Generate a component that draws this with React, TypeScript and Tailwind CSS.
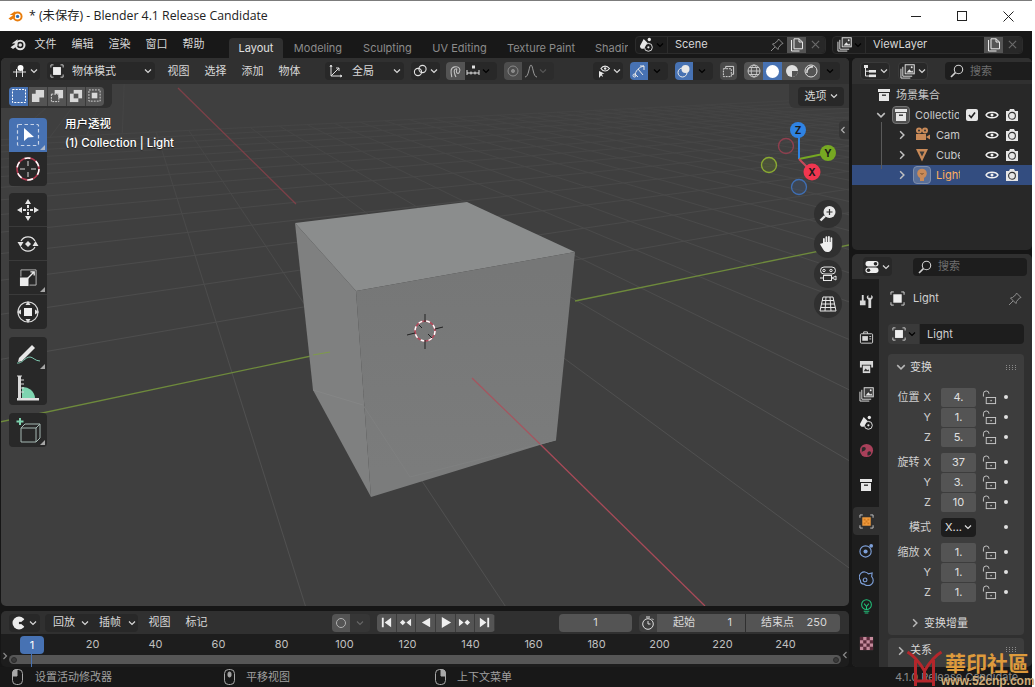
import React from "react";

type P = { className?: string };

const Chev = ({ dir = "down", className = "" }: { dir?: "down" | "right" | "left"; className?: string }) => {
  const d = dir === "down" ? "M1 2.5 L4 5.5 L7 2.5" : dir === "right" ? "M2.5 1 L5.5 4 L2.5 7" : "M5.5 1 L2.5 4 L5.5 7";
  return (
    <svg viewBox="0 0 8 8" className={`w-2 h-2 shrink-0 ${className}`} fill="none" stroke="currentColor" strokeWidth="1.2">
      <path d={d} />
    </svg>
  );
};

const BlenderLogo = ({ className = "", body = "#e0e0e0", eye = "#e0e0e0" }: { className?: string; body?: string; eye?: string }) => (
  <svg viewBox="0 0 18 14" className={className}>
    <path d="M8.5 1.2 L2 5.8 L6.5 5.9 L0.6 10 L3.4 12.2 L8.5 8.4Z" fill={body} />
    <circle cx="11.5" cy="7.5" r="4.8" fill="none" stroke={body} strokeWidth="2.3" />
    <circle cx="11.5" cy="7.5" r="2" fill={eye} />
  </svg>
);

const ObjIcon = ({ className = "", fill = "#eeeeee" }: { className?: string; fill?: string }) => (
  <svg viewBox="0 0 16 16" className={className} fill="none" stroke="#d8d8d8" strokeWidth="1">
    <path d="M1 4V1H4M12 1H15V4M15 12V15H12M4 15H1V12" />
    <rect x="3.5" y="3.5" width="9" height="9" fill={fill} stroke="none" />
  </svg>
);

const Lock = () => (
  <svg viewBox="0 0 16 16" className="w-[15px] h-[15px]" fill="none" stroke="#c8c8c8" strokeWidth="1">
    <path d="M1.5 7V4a3 3 0 0 1 6 0" />
    <rect x="4.5" y="8" width="10" height="6.5" />
    <rect x="9" y="10.6" width="1.4" height="1.4" fill="#c8c8c8" stroke="none" />
  </svg>
);

const Eye = ({ className = "" }: P) => (
  <svg viewBox="0 0 14 14" className={`w-[14px] h-[14px] ${className}`} fill="none" stroke="#f0f0f0" strokeWidth="1.5">
    <path d="M1 7 C3 3.2 11 3.2 13 7 C11 10.8 3 10.8 1 7 Z" />
    <circle cx="7" cy="7" r="1.5" fill="#f0f0f0" stroke="none" />
  </svg>
);

const Cam = ({ className = "" }: P) => (
  <svg viewBox="0 0 14 14" className={`w-[14px] h-[14px] ${className}`}>
    <path d="M1 3H4L5 1H9L10 3H13V13H1Z" fill="#e6e6e6" />
    <circle cx="7" cy="7.8" r="3.4" fill="none" stroke="#333" strokeWidth="1.1" />
  </svg>
);

const Mouse = ({ side }: { side: "l" | "m" | "r" }) => (
  <svg viewBox="0 0 11 16" className="w-[11px] h-4 shrink-0" fill="none" stroke="#a8a8a8" strokeWidth="1">
    <rect x="0.5" y="0.5" width="10" height="15" rx="4" />
    {side === "l" && <path d="M0.5 7V4.5a4 4 0 0 1 4-4H5V7Z" fill="#a8a8a8" />}
    {side === "r" && <path d="M10.5 7V4.5a4 4 0 0 0-4-4H6V7Z" fill="#a8a8a8" />}
    {side === "m" && <rect x="4" y="3" width="3" height="5" rx="1.5" fill="#a8a8a8" />}
  </svg>
);

const Search = () => (
  <svg viewBox="0 0 14 14" className="w-[14px] h-[14px] shrink-0" fill="none" stroke="#d0d0d0" strokeWidth="1.1">
    <circle cx="8.5" cy="5.5" r="4.2" />
    <path d="M5.4 8.6L1 13" strokeWidth="1.6" />
  </svg>
);

const Pin = ({ className = "" }: P) => (
  <svg viewBox="0 0 14 14" className={`w-[14px] h-[14px] ${className}`} fill="none" stroke="#8c8c8c" strokeWidth="1">
    <path d="M8.5 1L13 5.5 11.5 6 8.5 9.5 8 11.5 2.5 6 4.5 5.5 8 2.5ZM5 9L1 13" />
  </svg>
);

const Dup = () => (
  <svg viewBox="0 0 14 14" className="w-[14px] h-[14px]" fill="none" stroke="#e8e8e8" strokeWidth="1">
    <path d="M1.5 2V13H9.5M4 0.8H9L12.5 4V10.8H4Z" />
    <path d="M9 0.8V4H12.5" />
  </svg>
);

const XIcon = () => (
  <svg viewBox="0 0 10 10" className="w-[9px] h-[9px]" stroke="#6a6a6a" strokeWidth="1.3">
    <path d="M1 1L9 9M9 1L1 9" />
  </svg>
);

const LayersIcon = ({ className = "" }: P) => (
  <svg viewBox="0 0 16 16" className={`w-[15px] h-[15px] ${className}`} fill="none" stroke="#e6e6e6" strokeWidth="1">
    <path d="M1 5V15H11M3 3V13H13" />
    <rect x="5.5" y="0.8" width="9.7" height="9.7" fill="#3a3a3a" />
    <path d="M7 9L10 5.5 12 8 13 7 14.5 9Z" fill="#e6e6e6" stroke="none" />
    <circle cx="12.5" cy="3.5" r="1" fill="#e6e6e6" stroke="none" />
  </svg>
);

const SceneIcon = ({ className = "" }: P) => (
  <svg viewBox="0 0 16 16" className={`w-[15px] h-[15px] ${className}`} fill="none" stroke="#e6e6e6" strokeWidth="1">
    <path d="M5 2L1 9.5C1 12 3 12.8 5 12.5L9 6Z" fill="#e6e6e6" stroke="none" />
    <circle cx="11" cy="2.6" r="1.8" fill="#e6e6e6" stroke="none" />
    <circle cx="10" cy="11" r="4.2" />
    <circle cx="10" cy="11" r="1.2" fill="#e6e6e6" stroke="none" />
  </svg>
);

const Corner = () => (
  <svg viewBox="0 0 5 5" className="absolute right-[2px] bottom-[2px] w-[5px] h-[5px]">
    <path d="M5 0V5H0Z" fill="#d0d0d0" fillOpacity="0.75" />
  </svg>
);

const ToolBtn = ({ children, active, tri, rounded = "" }: { children: React.ReactNode; active?: boolean; tri?: boolean; rounded?: string }) => (
  <div className={`relative w-[38px] h-[34px] flex items-center justify-center ${active ? "bg-[#4772b3]" : "bg-[#282828]"} ${rounded}`}>
    {children}
    {tri && <Corner />}
  </div>
);

function buildGrid() {
  const O = [427, 333];
  const VG = [1778, 52];
  const VR = [126, 36];
  const kg = 0.063;
  const kr = 0.157;
  const pt = (a: number, b: number) => {
    const u = a * kg;
    const v = b * kr;
    const w = 1 + u + v;
    return [(O[0] + u * VG[0] + v * VR[0]) / w, (O[1] + u * VG[1] + v * VR[1]) / w];
  };
  const lines: number[][] = [];
  for (let a = -6; a <= 24; a++) {
    if (a === 0) continue;
    const s = pt(a, 14);
    const e = pt(a, -5.2);
    lines.push([s[0], s[1], e[0], e[1]]);
  }
  for (let b = -5; b <= 14; b++) {
    if (b === 0) continue;
    const s = pt(-14, b);
    const e = pt(30, b);
    lines.push([s[0], s[1], e[0], e[1]]);
  }
  return lines;
}

const Scene = () => {
  const lines = buildGrid();
  return (
    <svg viewBox="1 58 848 548" className="absolute inset-0 w-full h-full">
      <defs>
        <linearGradient id="gl" gradientUnits="userSpaceOnUse" x1="0" y1="80" x2="0" y2="420">
          <stop offset="0" stopColor="#424242" />
          <stop offset="0.45" stopColor="#4a4a4a" />
          <stop offset="1" stopColor="#505050" />
        </linearGradient>
        <linearGradient id="rf" gradientUnits="userSpaceOnUse" x1="460" y1="270" x2="460" y2="470">
          <stop offset="0" stopColor="#767777" />
          <stop offset="1" stopColor="#7b7c7c" />
        </linearGradient>
      </defs>
      {lines.map((l, i) => (
        <line key={i} x1={l[0]} y1={l[1]} x2={l[2]} y2={l[3]} stroke="url(#gl)" strokeWidth="1" />
      ))}
      <line x1="178" y1="88" x2="296" y2="204" stroke="#7d4048" strokeWidth="1.3" />
      <line x1="540" y1="444" x2="705" y2="606" stroke="#a84a58" strokeWidth="1.3" />
      <line x1="0" y1="422" x2="330" y2="352" stroke="#6e8a3c" strokeWidth="1.3" />
      <line x1="575" y1="301" x2="849" y2="245" stroke="#6e8a3c" strokeWidth="1.3" />
      <polygon points="295,223 467,202 575,252 356,291" fill="#8b8d8d" />
      <polygon points="295,223 356,291 371,497 313,390" fill="#7f8080" />
      <polygon points="356,291 575,252 556,440 371,497" fill="url(#rf)" />
      <polyline points="313,390 363,405" fill="none" stroke="#858686" strokeWidth="1" />
      <polyline points="363,405 410,477 556,440" fill="none" stroke="#7f8080" strokeWidth="1" />
      <line x1="472" y1="378" x2="540" y2="444" stroke="#a5555f" strokeWidth="1.3" />
      <line x1="313" y1="355" x2="330" y2="352" stroke="#7f9a4a" strokeWidth="1.2" />
      <g fill="none">
        <circle cx="425" cy="331" r="10" stroke="#b5485a" strokeWidth="1.5" />
        <circle cx="425" cy="331" r="10" stroke="#fff" strokeWidth="1.5" strokeDasharray="4 4" />
        <path d="M425 314V322M425 340V349M407 335L415 333M435 329L443 327M419 325L422 328M428 334L432 338" stroke="#222" strokeWidth="1" />
      </g>
    </svg>
  );
};

const Gizmo = () => (
  <svg viewBox="755 115 85 85" className="absolute left-[754px] top-[57px] w-[85px] h-[85px]">
    <circle cx="786" cy="146" r="7.5" fill="none" stroke="#8e3f4e" strokeWidth="1.4" />
    <circle cx="799" cy="187" r="7.5" fill="#3d4d66" fillOpacity="0.5" stroke="#3f6fb4" strokeWidth="1.3" />
    <circle cx="769" cy="165" r="7.5" fill="#5c6f30" fillOpacity="0.4" stroke="#8aaa32" strokeWidth="1.4" />
    <line x1="799" y1="159" x2="799" y2="132" stroke="#2f83e3" strokeWidth="2" />
    <line x1="799" y1="159" x2="828" y2="153" stroke="#76a822" strokeWidth="2" />
    <line x1="799" y1="159" x2="812" y2="172" stroke="#c84a5c" strokeWidth="2" />
    <circle cx="798" cy="130" r="8" fill="#2f83e3" />
    <circle cx="828" cy="153" r="8" fill="#76a822" />
    <circle cx="812" cy="172" r="8.5" fill="#f0364f" />
    <g fontFamily="Inter" fontSize="10" fontWeight="700" textAnchor="middle" fill="#1a1a1a">
      <text x="798" y="134">Z</text>
      <text x="828" y="157">Y</text>
      <text x="812" y="176">X</text>
    </g>
  </svg>
);

const MenuTxt = ({ children, w = "w-[37px]" }: { children: React.ReactNode; w?: string }) => (
  <div className={`${w} text-center text-[#d8d8d8] text-[11px] leading-none`}>{children}</div>
);

const Drop = ({ className = "", children }: { className?: string; children: React.ReactNode }) => (
  <div className={`h-[18px] flex items-center justify-center gap-[3px] rounded-[4px] bg-[#282828] text-[#d8d8d8] ${className}`}>{children}</div>
);

const WorkspaceTab = ({ children, w, active }: { children: React.ReactNode; w: string; active?: boolean }) => (
  <div className={`${w} h-[20px] flex items-center justify-center text-[11px] leading-none rounded-t-[4px] shrink-0 whitespace-nowrap overflow-hidden ${active ? "bg-[#303030] text-[#e0e0e0]" : "text-[#8b8b8b]"}`}>
    {children}
  </div>
);

const ViewportHeader = () => (
  <div className="relative z-10 flex items-center h-[26px] bg-[#303030] pl-[9px] shrink-0">
    <Drop className="w-[30px]">
      <svg viewBox="0 0 14 14" className="w-[14px] h-[14px]" fill="none" stroke="#e0e0e0" strokeWidth="1">
        <path d="M0 8H13M3.5 5V13M9.5 5V13" />
        <circle cx="7.5" cy="4" r="3" fill="#fff" stroke="none" />
      </svg>
      <Chev />
    </Drop>
    <Drop className="w-[108px] ml-[7px] !justify-start pl-[3px] gap-[8px]">
      <ObjIcon className="w-[14px] h-[14px]" />
      <span className="text-[11px] leading-none">物体模式</span>
      <Chev className="ml-auto mr-[3px]" />
    </Drop>
    <div className="flex ml-[5px]">
      <MenuTxt>视图</MenuTxt>
      <MenuTxt>选择</MenuTxt>
      <MenuTxt>添加</MenuTxt>
      <MenuTxt>物体</MenuTxt>
    </div>
    <Drop className="w-[79px] ml-[17px] !justify-start pl-[4px] gap-[9px]">
      <svg viewBox="0 0 14 14" className="w-[14px] h-[14px]" fill="none" stroke="#e0e0e0" strokeWidth="1">
        <path d="M2 1V12H13M2 12L10 4M2 1L1 3M2 1L3 3M13 12L11 11M13 12L11 13M10 4H7M10 4V7" />
      </svg>
      <span className="text-[11px] leading-none">全局</span>
      <Chev className="ml-auto mr-[3px]" />
    </Drop>
    <Drop className="w-[29px] ml-[7px]">
      <svg viewBox="0 0 14 14" className="w-[14px] h-[14px]" fill="none" stroke="#e0e0e0" strokeWidth="1.1">
        <circle cx="5" cy="8" r="3.6" />
        <circle cx="9.5" cy="5" r="3.6" />
      </svg>
      <Chev />
    </Drop>
    <div className="flex items-center h-[18px] ml-[6px] rounded-[4px] bg-[#282828] w-[51px]">
      <div className="w-[19px] h-[18px] bg-[#545454] rounded-l-[4px] flex items-center justify-center">
        <svg viewBox="0 0 14 14" className="w-[13px] h-[13px]" fill="none" stroke="#c0c0c0" strokeWidth="1.2">
          <path d="M3 13C2 8 1 3 6 2C11 1 13 5 11 8C10 10 8 9 8 7C8 5 9 5 8 4C6 4 5 6 6 9C6.5 11 7 12 7.5 13" />
        </svg>
      </div>
      <svg viewBox="0 0 14 14" className="w-[14px] h-[14px] ml-[1px]" fill="none" stroke="#e0e0e0" strokeWidth="1">
        <path d="M1 6V11M13 6V11M1 9H13M5 7.5V10.5M9 7.5V10.5" />
        <rect x="6" y="1.5" width="3" height="3" fill="#e0e0e0" stroke="none" />
      </svg>
      <Chev className="ml-[2px]" />
    </div>
    <div className="flex items-center h-[18px] ml-[7px] w-[50px]">
      <div className="w-[18px] h-[18px] bg-[#4d4d4d] rounded-l-[4px] flex items-center justify-center">
        <svg viewBox="0 0 12 12" className="w-3 h-3" fill="none" stroke="#8a8a8a">
          <circle cx="6" cy="6" r="5" />
          <circle cx="6" cy="6" r="1.6" fill="#8a8a8a" />
        </svg>
      </div>
      <div className="h-[18px] flex-1 bg-[#2c2c2c] rounded-r-[4px] flex items-center pl-[2px] gap-[1px]">
        <svg viewBox="0 0 14 14" className="w-[14px] h-[14px]" fill="none" stroke="#9a9a9a">
          <path d="M1 13C5 13 5 1 7 1C9 1 9 13 13 13" />
        </svg>
        <Chev className="text-[#555555]" />
      </div>
    </div>
    <Drop className="w-[30px] ml-[39px]">
      <svg viewBox="0 0 14 14" className="w-[14px] h-[14px]">
        <path d="M3 7 L3 14 L5 11.5 L7 13 L6 10 L8.5 9.5Z" fill="#e8e8e8" />
        <path d="M5 4.5C7 1.2 11 1.2 13.5 4.5C11 7.8 7 7.8 5 4.5Z" fill="none" stroke="#e8e8e8" strokeWidth="1.2" />
        <circle cx="9.2" cy="4.5" r="1.2" fill="#e8e8e8" />
      </svg>
      <Chev />
    </Drop>
    <div className="flex items-center h-[18px] ml-[7px] rounded-[4px] bg-[#282828] w-[38px]">
      <div className="w-[18px] h-[18px] bg-[#4772b3] rounded-l-[4px] flex items-center justify-center">
        <svg viewBox="0 0 14 14" className="w-[14px] h-[14px]" fill="none" stroke="#e8e8e8" strokeWidth="1">
          <path d="M3 12C3 7 7 3 12 2M8 2H12V6M3 10L6 13M6 5L11 11" />
          <circle cx="2.5" cy="11.5" r="1.5" />
        </svg>
      </div>
      <Chev className="ml-[5px]" />
    </div>
    <div className="flex items-center h-[18px] ml-[7px] rounded-[4px] bg-[#282828] w-[38px]">
      <div className="w-[18px] h-[18px] bg-[#4772b3] rounded-l-[4px] flex items-center justify-center">
        <svg viewBox="0 0 14 14" className="w-[14px] h-[14px]" fill="none" stroke="#e8e8e8" strokeWidth="1">
          <circle cx="5.5" cy="8.5" r="4.5" />
          <circle cx="8.5" cy="5" r="4" fill="#e8e8e8" stroke="none" />
        </svg>
      </div>
      <Chev className="ml-[5px]" />
    </div>
    <div className="w-[17px] h-[18px] ml-[7px] bg-[#4a4a4a] rounded-[4px] flex items-center justify-center">
      <svg viewBox="0 0 14 14" className="w-[13px] h-[13px]" fill="none" stroke="#e0e0e0">
        <path d="M4 4V1.5H12.5V10H10" />
        <rect x="1.5" y="4" width="8.5" height="8.5" strokeDasharray="2 1" />
      </svg>
    </div>
    <div className="flex items-center h-[18px] ml-[7px] w-[96px] rounded-[4px] bg-[#282828]">
      <div className="w-[19px] h-[18px] bg-[#545454] rounded-l-[4px] flex items-center justify-center">
        <svg viewBox="0 0 14 14" className="w-[14px] h-[14px]" fill="none" stroke="#d0d0d0" strokeWidth="0.9">
          <circle cx="7" cy="7" r="6" />
          <ellipse cx="7" cy="7" rx="2.8" ry="6" />
          <path d="M1 7H13M2 3.5H12M2 10.5H12" />
        </svg>
      </div>
      <div className="w-[19px] h-[18px] bg-[#4772b3] flex items-center justify-center">
        <div className="w-[13px] h-[13px] rounded-full bg-white" />
      </div>
      <div className="w-[19px] h-[18px] bg-[#545454] flex items-center justify-center">
        <svg viewBox="0 0 14 14" className="w-[14px] h-[14px]">
          <circle cx="7" cy="7" r="6" fill="#e0e0e0" />
          <path d="M7 7L7 13A6 6 0 0 0 13 7Z" fill="#545454" />
        </svg>
      </div>
      <div className="w-[19px] h-[18px] bg-[#545454] rounded-r-[4px] flex items-center justify-center">
        <svg viewBox="0 0 14 14" className="w-[14px] h-[14px]" fill="none" stroke="#e0e0e0">
          <circle cx="7" cy="7" r="6" />
          <path d="M3 9A5 5 0 0 1 9 3" strokeWidth="1.6" />
        </svg>
      </div>
      <Chev className="ml-[6px]" />
    </div>
  </div>
);

const SelectModes = () => (
  <div className="absolute left-0 top-[26px] w-[111px] h-[24px] bg-[#303030] rounded-br-[6px] flex items-center pl-[8px]">
    <div className="flex h-[19px] w-[95px] rounded-[4px] overflow-hidden bg-[#545454]">
      <div className="w-[19px] bg-[#4772b3] flex items-center justify-center">
        <svg viewBox="0 0 14 14" className="w-[14px] h-[14px]" fill="none" stroke="#fff" strokeDasharray="2 1.2">
          <rect x="0.5" y="0.5" width="13" height="13" />
        </svg>
      </div>
      {[
        <path key="a" d="M5 1H14V9H9V14H1V5H5Z" fill="#d8d8d8" />,
        <g key="b"><path d="M5 1H14V10H9V5H5Z" fill="#d8d8d8" /><rect x="1.5" y="5.5" width="8" height="8" fill="none" stroke="#d8d8d8" strokeDasharray="2 1" /></g>,
        <g key="c"><rect x="5" y="1" width="9" height="9" fill="#d8d8d8" /><rect x="1" y="5" width="9" height="9" fill="#d8d8d8" /><rect x="5" y="5" width="5" height="5" fill="#545454" /></g>,
        <g key="d"><rect x="1" y="1" width="12" height="12" fill="none" stroke="#d8d8d8" strokeDasharray="2 1.2" /><rect x="4" y="4" width="6" height="6" fill="#d8d8d8" /></g>,
      ].map((g, i) => (
        <div key={i} className="w-[19px] border-l border-[#3a3a3a] flex items-center justify-center">
          <svg viewBox="0 0 15 15" className="w-[14px] h-[14px]">{g}</svg>
        </div>
      ))}
    </div>
  </div>
);

const Tools = () => (
  <div className="absolute left-[8px] top-[60px] flex flex-col">
    <ToolBtn active tri rounded="rounded-t-[4px]">
      <svg viewBox="0 0 24 24" className="w-6 h-6">
        <rect x="1.5" y="1.5" width="21" height="21" rx="1" fill="none" stroke="#c8d4e8" strokeWidth="1.2" strokeDasharray="3.5 2.5" />
        <path d="M8 5L8 18L12 14.5L18 14Z" fill="#fff" />
      </svg>
    </ToolBtn>
    <ToolBtn rounded="rounded-b-[4px]">
      <svg viewBox="0 0 26 26" className="w-[26px] h-[26px]" fill="none">
        <circle cx="13" cy="13" r="11" stroke="#b03a50" strokeWidth="1.6" />
        <circle cx="13" cy="13" r="11" stroke="#fff" strokeWidth="1.6" strokeDasharray="6 6" />
        <path d="M13 5V10M13 16V21M5 13H10M16 13H21" stroke="#d8d8d8" />
      </svg>
    </ToolBtn>
    <div className="h-[7px]" />
    <ToolBtn rounded="rounded-t-[4px] border-b border-[#3a3a3a]">
      <svg viewBox="0 0 24 24" className="w-6 h-6" fill="#e4e4e4">
        <path d="M12 1L15 6H9ZM12 23L9 18H15ZM1 12L6 9V15ZM23 12L18 15V9Z" />
        <rect x="11" y="7" width="2" height="3" />
        <rect x="11" y="14" width="2" height="3" />
        <rect x="7" y="11" width="3" height="2" />
        <rect x="14" y="11" width="3" height="2" />
        <circle cx="12" cy="12" r="1" />
      </svg>
    </ToolBtn>
    <ToolBtn rounded="border-b border-[#3a3a3a]">
      <svg viewBox="0 0 24 24" className="w-6 h-6" fill="none" stroke="#e4e4e4" strokeWidth="1.2">
        <path d="M5 9A8 8 0 0 1 19 9M5 15A8 8 0 0 0 19 15" />
        <path d="M12 9L15 12L12 15L9 12Z" fill="#e4e4e4" stroke="none" />
        <path d="M1.5 10H7.5L4.5 15ZM22.5 14H16.5L19.5 9Z" fill="#e4e4e4" stroke="none" />
      </svg>
    </ToolBtn>
    <ToolBtn tri rounded="border-b border-[#3a3a3a]">
      <svg viewBox="0 0 20 20" className="w-[19px] h-[19px]" fill="none" stroke="#b8b8b8" strokeWidth="1">
        <path d="M2 9V2H18V18H11" />
        <rect x="1" y="10" width="9" height="9" fill="#ececec" stroke="none" />
        <path d="M9 11L16 4M12 4H16V8" stroke="#ececec" strokeWidth="1.4" />
      </svg>
    </ToolBtn>
    <ToolBtn rounded="rounded-b-[4px]">
      <svg viewBox="0 0 24 24" className="w-6 h-6" fill="none" stroke="#d8d8d8" strokeWidth="1.2">
        <circle cx="12" cy="12" r="10" />
        <rect x="8" y="8" width="8" height="8" fill="#f0f0f0" stroke="none" />
        <path d="M12 1L14.5 5H9.5ZM12 23L9.5 19H14.5ZM1 12L5 9.5V14.5ZM23 12L19 14.5V9.5Z" fill="#e0e0e0" stroke="none" />
      </svg>
    </ToolBtn>
    <div className="h-[8px]" />
    <ToolBtn tri rounded="rounded-t-[4px]">
      <svg viewBox="0 0 26 22" className="w-[26px] h-[22px]" fill="none">
        <path d="M4 15L17 2L20 5L7 18L3 19Z" fill="#e8e8e8" />
        <path d="M2 20C7 21 10 14 15 14C18 14 20 18 25 18" stroke="#7ec9b0" strokeWidth="1" />
      </svg>
    </ToolBtn>
    <ToolBtn rounded="rounded-b-[4px]">
      <svg viewBox="0 0 24 26" className="w-6 h-[26px]" fill="none">
        <path d="M6 12A12 12 0 0 1 19 23H6Z" fill="#7ed4b0" />
        <path d="M1 23H23V25.5H1Z" fill="#e0e0e0" />
        <rect x="2" y="1" width="3" height="24" fill="#d8d8d8" />
        <path d="M1 1H6M5 5H8M5 9H8M5 13H8M5 17H8" stroke="#d8d8d8" />
      </svg>
    </ToolBtn>
    <div className="h-[8px]" />
    <ToolBtn tri rounded="rounded-[4px]">
      <svg viewBox="0 0 28 26" className="w-7 h-[26px]" fill="none" stroke="#a5b8b3" strokeWidth="1">
        <path d="M7 11L11 7H26V21L22 25H7ZM7 11H22V25M22 11L26 7" />
        <path d="M6 1V8M2.5 4.5H9.5" stroke="#7ed4b0" strokeWidth="2" />
      </svg>
    </ToolBtn>
  </div>
);

const NavBtn = ({ children }: { children: React.ReactNode }) => (
  <div className="w-[28px] h-[28px] rounded-full bg-[#303030] flex items-center justify-center">{children}</div>
);

const NavGizmo = () => (
  <div className="absolute left-[813px] top-[142px] flex flex-col gap-[2px]">
    <NavBtn>
      <svg viewBox="0 0 18 18" className="w-[18px] h-[18px]">
        <circle cx="10.5" cy="7" r="6" fill="#e8e8e8" />
        <path d="M6 11L1.5 15.5" stroke="#e8e8e8" strokeWidth="2.4" />
        <path d="M10.5 4V10M7.5 7H13.5" stroke="#303030" strokeWidth="1.2" />
      </svg>
    </NavBtn>
    <NavBtn>
      <svg viewBox="0 0 18 18" className="w-[18px] h-[18px]" fill="#eeeeee">
        <path d="M4 8V4a.9.9 0 0 1 1.8 0V7H6.5V2.2a.9.9 0 0 1 1.8 0V7H9V1.8a.9.9 0 0 1 1.8 0V7h.7V3.2a.9.9 0 0 1 1.8 0V11C13.3 15 11 17 8.5 17C5.5 17 4.5 15 3 12.5L1.2 9.6C.8 8.8 1.8 8 2.6 8.6Z" />
      </svg>
    </NavBtn>
    <NavBtn>
      <svg viewBox="0 0 18 18" className="w-[18px] h-[18px]" fill="none" stroke="#e8e8e8">
        <rect x="1.5" y="2" width="15" height="7" rx="3.5" />
        <circle cx="5" cy="5.5" r="1.2" />
        <circle cx="12" cy="5.5" r="1.2" />
        <rect x="4.5" y="10.5" width="8" height="5" />
        <path d="M13 13L17 11V15Z" />
        <path d="M1 13H4" />
      </svg>
    </NavBtn>
    <NavBtn>
      <svg viewBox="0 0 18 18" className="w-[18px] h-[18px]" fill="none" stroke="#e8e8e8">
        <path d="M4 2H14L17 16H1ZM2.5 9H15.5M7 2L6 16M11 2L12 16M3 5.5H15M1.8 12.5H16.2" />
      </svg>
    </NavBtn>
  </div>
);

const Viewport = () => (
  <div className="relative h-[548px] rounded-[5px] overflow-hidden bg-[#3f3f3f] shrink-0">
    <Scene />
    <ViewportHeader />
    <SelectModes />
    <div className="absolute right-0 top-[26px] w-[60px] h-[24px] bg-[#363636] rounded-bl-[6px] flex justify-end items-center pr-[5px]">
      <Drop className="w-[46px] h-[19px] text-[11px] leading-none">
        <span>选项</span>
        <Chev />
      </Drop>
    </div>
    <Tools />
    <div className="absolute left-[64px] top-[57px] text-white text-[11.5px] font-medium [text-shadow:0_1px_1px_rgba(0,0,0,0.6)]">
      <div className="h-[19px] leading-[19px]">用户透视</div>
      <div className="h-[19px] leading-[19px]">(1) Collection | Light</div>
    </div>
    <Gizmo />
    <NavGizmo />
    <div className="absolute right-0 top-[63px] w-[10px] h-[18px] bg-[#363636] rounded-l-[4px] flex items-center text-[#b0b0b0]">
      <Chev dir="left" />
    </div>
  </div>
);

const TransportIcon = ({ d }: { d: string }) => (
  <div className="w-[19.67px] h-[18px] bg-[#545454] border-r border-[#3c3c3c] flex items-center justify-center">
    <svg viewBox="0 0 14 14" className="w-[13px] h-[13px]" fill="#eeeeee">
      <path d={d} />
    </svg>
  </div>
);

const Timeline = () => {
  const nums = [20, 40, 60, 80, 100, 120, 140, 160, 180, 200, 220, 240];
  return (
    <div className="relative h-[56px] rounded-[5px] overflow-hidden bg-[#1d1d1d] shrink-0">
      <div className="flex items-center h-[23px] bg-[#303030] pl-[8px]">
        <Drop className="w-[31px]">
          <svg viewBox="0 0 14 14" className="w-[14px] h-[14px]">
            <circle cx="7" cy="7" r="6.5" fill="#ececec" />
            <path d="M14 2L8 7L14 12Z" fill="#282828" />
            <circle cx="8" cy="7" r="1.2" fill="#282828" />
          </svg>
          <Chev />
        </Drop>
        <div className="flex items-center h-[18px] w-[93px] ml-[5px] rounded-[4px] bg-[#282828] text-[#d8d8d8] text-[11px] leading-none">
          <span className="ml-[8px]">回放</span>
          <Chev className="ml-[6px]" />
          <span className="ml-[10px]">插帧</span>
          <Chev className="ml-[7px]" />
        </div>
        <MenuTxt w="w-[37px] ml-[3px]">视图</MenuTxt>
        <MenuTxt>标记</MenuTxt>
        <div className="ml-[117px] w-[18px] h-[18px] bg-[#545454] rounded-l-[4px] flex items-center justify-center">
          <div className="w-[10px] h-[10px] rounded-full border border-[#b0b0b0]" />
        </div>
        <div className="w-[20px] h-[18px] bg-[#363636] rounded-r-[4px] flex items-center justify-center text-[#666666]">
          <Chev />
        </div>
        <div className="flex ml-[7px] rounded-[4px] overflow-hidden">
          <TransportIcon d="M2 2H4V12H2ZM12 2V12L5 7Z" />
          <TransportIcon d="M1 7L4 4L7 7L4 10ZM8 7L13 3V11Z" />
          <TransportIcon d="M12 2V12L3 7Z" />
          <TransportIcon d="M3 1V13L13 7Z" />
          <TransportIcon d="M1 3V11L6 7ZM7 7L10 4L13 7L10 10Z" />
          <TransportIcon d="M2 2V12L9 7ZM10 2H12V12H10Z" />
        </div>
        <div className="ml-[64px] w-[73px] h-[18px] bg-[#545454] rounded-[4px] flex items-center justify-center text-[#d8d8d8] text-[11px] leading-none">1</div>
        <div className="ml-[7px] flex items-center h-[18px] w-[201px] rounded-[4px] overflow-hidden text-[#d8d8d8] text-[11px] leading-none">
          <div className="w-[18px] h-full bg-[#3e3e3e] flex items-center justify-center">
            <svg viewBox="0 0 14 14" className="w-[14px] h-[14px]" fill="none" stroke="#e0e0e0">
              <circle cx="7" cy="8" r="5.3" />
              <path d="M7 5V8H9.5M5 1H9M11 2.5L12.5 4" />
            </svg>
          </div>
          <div className="w-[88px] h-full bg-[#545454] flex items-center justify-between pl-[16px] pr-[13px]">
            <span>起始</span>
            <span>1</span>
          </div>
          <div className="flex-1 h-full ml-px bg-[#545454] flex items-center justify-between pl-[15px] pr-[13px]">
            <span>结束点</span>
            <span>250</span>
          </div>
        </div>
      </div>
      <div className="relative flex items-center h-[21px] pl-[60px] text-[#c0c0c0] text-[11px] leading-none">
        {nums.map((n) => (
          <div key={n} className="w-[63px] text-center shrink-0">{n}</div>
        ))}
        <div className="absolute left-[19px] top-[2px] w-[24px] h-[18px] rounded-[4px] bg-[#4772b3] text-white flex items-center justify-center">1</div>
      </div>
      <div className="mx-[8px] h-[9px] rounded-full bg-[#565656] flex items-center justify-between px-[2px]">
        <div className="w-[6px] h-[6px] rounded-full border border-[#2c2c2c] bg-[#3a3a3a]" />
        <div className="w-[6px] h-[6px] rounded-full border border-[#2c2c2c] bg-[#3a3a3a]" />
      </div>
      <div className="absolute left-[30px] top-[43px] bottom-0 w-px bg-[#4772b3]" />
      <Chev dir="right" className="absolute left-0 top-[41px] text-[#8a8a8a]" />
      <Chev dir="left" className="absolute right-0 top-[40px] text-[#8a8a8a]" />
    </div>
  );
};

const OutRow = ({ indent, chev, icon, label, lw, selected, active, check }: { indent: string; chev?: "down" | "right"; icon: React.ReactNode; label: string; lw: string; selected?: boolean; active?: boolean; check?: boolean }) => (
  <div className={`relative flex items-center h-[20px] ${selected ? "bg-[#334d80]" : ""}`}>
    <div className={`flex items-center shrink-0 ${indent}`}>
      {chev ? <Chev dir={chev} className="text-[#c0c0c0] w-[10px] h-[10px]" /> : <div className="w-[10px]" />}
      <div className={`w-[18px] h-[18px] ml-[6px] flex items-center justify-center rounded-[4px] ${active ? (selected ? "bg-[#5a7099] border border-[#7f8eaa]" : "bg-[#4f4f4f] border border-[#757575]") : ""}`}>{icon}</div>
    </div>
    <div className={`ml-[5px] ${lw} overflow-hidden whitespace-nowrap text-[11px] leading-none ${selected ? "text-[#ffaf5f]" : "text-[#c8c8c8]"}`}>{label}</div>
    <div className="absolute right-[13px] flex items-center gap-[6px]">
      <Eye />
      <Cam />
    </div>
    {check && (
      <div className="absolute left-[114px] w-[12px] h-[12px] rounded-[2px] bg-[#e6e6e6] flex items-center justify-center">
        <svg viewBox="0 0 10 10" className="w-[10px] h-[10px]" fill="none" stroke="#222" strokeWidth="1.6">
          <path d="M2 5L4.2 7.5L8 2.5" />
        </svg>
      </div>
    )}
  </div>
);

const BoxIcon = () => (
  <svg viewBox="0 0 14 14" className="w-[14px] h-[14px]">
    <path d="M1 1H13V4H1ZM2 5H12V13H2Z" fill="#e6e6e6" />
    <rect x="5" y="6.5" width="4" height="1.4" fill="#333" />
  </svg>
);

const Outliner = () => (
  <div className="h-[192px] rounded-[5px] overflow-hidden bg-[#282828] shrink-0">
    <div className="flex items-center h-[26px] bg-[#303030] pl-[8px]">
      <Drop className="w-[30px] border border-[#3a3a3a]">
        <svg viewBox="0 0 14 14" className="w-[14px] h-[14px]" fill="#e6e6e6">
          <rect x="1" y="1" width="4" height="3" />
          <rect x="6" y="6" width="7" height="2.6" />
          <rect x="6" y="10.5" width="7" height="2.6" />
          <path d="M2.5 4V12H6M2.5 7.2H6" stroke="#e6e6e6" fill="none" />
        </svg>
        <Chev />
      </Drop>
      <Drop className="w-[30px] ml-[8px] border border-[#3a3a3a]">
        <LayersIcon />
        <Chev />
      </Drop>
      <div className="ml-[17px] flex-1 h-[18px] rounded-l-[4px] bg-[#1d1d1d] flex items-center pl-[5px] gap-[6px] text-[#6d6d6d] text-[11px] leading-none">
        <Search />
        <span>搜索</span>
      </div>
    </div>
    <div className="pt-[1px]">
      <div className="flex items-center h-[20px] pl-[23px]">
        <div className="ml-0 w-[18px] flex justify-center"><BoxIcon /></div>
        <span className="ml-[3px] text-[#c8c8c8] text-[11px] leading-none">场景集合</span>
      </div>
      <div className="relative">
        <OutRow indent="pl-[24px]" chev="down" active check icon={<BoxIcon />} label="Collection" lw="w-[44px]" />
        <OutRow indent="pl-[45px]" chev="right" label="Camera" lw="w-[24px]" icon={
          <svg viewBox="0 0 16 16" className="w-4 h-4" fill="#c98a58">
            <circle cx="5" cy="3.5" r="3" />
            <circle cx="11" cy="3.5" r="3" />
            <rect x="2" y="7" width="10" height="6" />
            <path d="M12 10L16 7.5V12.5Z" />
            <circle cx="5" cy="3.5" r="1" fill="#333" />
            <circle cx="11" cy="3.5" r="1" fill="#333" />
          </svg>
        } />
        <OutRow indent="pl-[45px]" chev="right" label="Cube" lw="w-[24px]" icon={
          <svg viewBox="0 0 14 14" className="w-[14px] h-[14px]">
            <path d="M1 1H13L7 13.5Z" fill="#c98a58" />
            <path d="M4.5 3.5H9.5L7 8.5Z" fill="#3a3a3a" />
          </svg>
        } />
        <OutRow indent="pl-[45px]" chev="right" selected active label="Light" lw="w-[24px]" icon={
          <svg viewBox="0 0 14 14" className="w-[14px] h-[14px]">
            <circle cx="7" cy="5.5" r="4.8" fill="#c98a58" />
            <rect x="5" y="10" width="4" height="3" fill="#c98a58" />
            <path d="M5.5 5L7 6.5L8.5 5" fill="none" stroke="#6a4a2a" />
          </svg>
        } />
        <div className="absolute left-[29px] top-[17px] h-[47px] w-px bg-[#5a5a5a]" />
      </div>
    </div>
  </div>
);

const Tab = ({ children, active }: { children: React.ReactNode; active?: boolean }) => (
  <div className={`w-[26px] h-[28px] flex items-center justify-center shrink-0 rounded-l-[4px] ${active ? "bg-[#303030]" : ""}`}>{children}</div>
);

const PropTabs = () => (
  <div className="w-[27px] bg-[#1d1d1d] pl-px shrink-0 flex flex-col pt-[8px]">
    <Tab>
      <svg viewBox="0 0 16 16" className="w-[15px] h-[15px]" fill="#d8d8d8">
        <path d="M3 1H5V7H7V12H1V7H3Z" />
        <path d="M10 1V4H13V1C15 2 15.5 4.5 13 6V15H10V6C7.5 4.5 8 2 10 1Z" />
      </svg>
    </Tab>
    <div className="h-[8px] shrink-0" />
    <Tab>
      <svg viewBox="0 0 16 16" className="w-[15px] h-[15px]" fill="none" stroke="#d8d8d8">
        <rect x="1.5" y="4" width="13" height="10" rx="1" />
        <path d="M5 4V2H9V4" />
        <rect x="3.5" y="6.5" width="6" height="5" fill="#d8d8d8" stroke="none" />
        <path d="M11 7H13M11 9.5H13" />
      </svg>
    </Tab>
    <div className="h-px shrink-0" />
    <Tab>
      <svg viewBox="0 0 16 16" className="w-[15px] h-[15px]" fill="#d8d8d8">
        <path d="M1 2H15V9H13V6H3V9H1Z" />
        <rect x="4" y="7" width="8" height="8" />
        <path d="M5 13L7 10L9 12L10 11L11 13Z" fill="#333" />
      </svg>
    </Tab>
    <Tab><LayersIcon /></Tab>
    <Tab><SceneIcon /></Tab>
    <Tab>
      <svg viewBox="0 0 16 16" className="w-[15px] h-[15px]">
        <circle cx="8" cy="8" r="7" fill="#a8405a" />
        <path d="M3 5C6 3 8 5 7 7C6 9 4 8 3 10ZM9 10C11 8 13 9 13 11C12 13 10 14 9 13Z" fill="#2a2a2a" />
      </svg>
    </Tab>
    <div className="h-[7px] shrink-0" />
    <Tab><BoxIcon /></Tab>
    <div className="h-[8px] shrink-0" />
    <Tab active>
      <svg viewBox="0 0 16 16" className="w-[15px] h-[15px]" fill="none" stroke="#c8c8c8">
        <path d="M1 4V1H4M12 1H15V4M15 12V15H12M4 15H1V12" />
        <rect x="3.5" y="3.5" width="9" height="9" fill="#f09a3c" stroke="none" />
        <path d="M5 5H7V7H5ZM9 5H11V7H9ZM7 7H9V9H7ZM5 9H7V11H5ZM9 9H11V11H9Z" fill="#d07a20" stroke="none" />
      </svg>
    </Tab>
    <div className="h-px shrink-0" />
    <Tab>
      <svg viewBox="0 0 16 16" className="w-[15px] h-[15px]" fill="none" stroke="#7d9fd8" strokeWidth="1.2">
        <circle cx="7" cy="9" r="6" />
        <circle cx="7" cy="9" r="2.2" fill="#7d9fd8" stroke="none" />
        <circle cx="13" cy="3" r="2" fill="#7d9fd8" stroke="none" />
      </svg>
    </Tab>
    <Tab>
      <svg viewBox="0 0 16 16" className="w-[15px] h-[15px]" fill="none" stroke="#7d9fd8" strokeWidth="1.2">
        <path d="M1.5 10A5 5 0 0 1 10 3L14 2L13.5 6A5 5 0 0 1 5.5 14C3 14 1.5 12.5 1.5 10Z" />
        <circle cx="6.5" cy="9.5" r="2" />
      </svg>
    </Tab>
    <Tab>
      <svg viewBox="0 0 16 16" className="w-[15px] h-[15px]" fill="none" stroke="#22c07a" strokeWidth="1.1">
        <circle cx="8" cy="6" r="5.2" />
        <path d="M5.5 5L8 8L10.5 5M8 8V11M5 13H11M6 15H10" />
      </svg>
    </Tab>
    <div className="h-[9px] shrink-0" />
    <Tab>
      <svg viewBox="0 0 16 16" className="w-[15px] h-[15px]">
        <rect x="1" y="1" width="14" height="14" fill="#c58a9c" />
        <path d="M1 1H4.5V4.5H1ZM8 1H11.5V4.5H8ZM4.5 4.5H8V8H4.5ZM11.5 4.5H15V8H11.5ZM1 8H4.5V11.5H1ZM8 8H11.5V11.5H8ZM4.5 11.5H8V15H4.5ZM11.5 11.5H15V15H11.5Z" fill="#5a2a3a" />
      </svg>
    </Tab>
  </div>
);

const ValRow = ({ label, axis, value, lock = true, dark }: { label?: string; axis?: string; value: string; lock?: boolean; dark?: boolean }) => (
  <div className="flex items-center h-[20px] text-[11px] leading-none">
    <div className="w-[43px] flex justify-end gap-[4px] text-[#cfcfcf]">
      {label && <span>{label}</span>}
      {axis && <span>{axis}</span>}
    </div>
    <div className={`ml-[10px] w-[35px] h-[19px] flex items-center justify-center gap-[2px] ${dark ? "bg-[#1d1d1d] rounded-[4px]" : "bg-[#545454] rounded-[2px]"} text-[#e0e0e0]`}>
      <span>{value}</span>
      {dark && <Chev />}
    </div>
    <div className="w-[15px] ml-[6px] flex justify-center">{lock && <Lock />}</div>
    <div className="ml-[7px] w-[4px] h-[4px] rounded-full bg-[#e0e0e0]" />
  </div>
);

const Grip = ({ className = "" }: P) => (
  <svg viewBox="0 0 12 5" className={`w-3 h-[5px] ${className}`} fill="#8a8a8a">
    {[0, 3, 6, 9].map((x) => (
      <React.Fragment key={x}>
        <rect x={x} y="0" width="1" height="1" />
        <rect x={x} y="2" width="1" height="1" />
        <rect x={x} y="4" width="1" height="1" />
      </React.Fragment>
    ))}
  </svg>
);

const Properties = () => (
  <div className="h-[413px] rounded-[5px] overflow-hidden bg-[#303030] flex flex-col shrink-0">
    <div className="flex items-center h-[25px] pl-[11px] shrink-0">
      <Drop className="w-[29px] h-[19px] bg-[#282828]">
        <svg viewBox="0 0 14 14" className="w-[14px] h-[14px]" fill="#eeeeee">
          <rect x="0.5" y="1" width="13" height="5.4" rx="2.7" />
          <rect x="0.5" y="7.6" width="13" height="5.4" rx="2.7" />
          <circle cx="10.5" cy="3.7" r="1.8" fill="#282828" />
          <circle cx="3.5" cy="10.3" r="1.8" fill="#282828" />
        </svg>
        <Chev />
      </Drop>
      <div className="ml-[21px] w-[114px] h-[18px] rounded-[4px] bg-[#1d1d1d] flex items-center pl-[5px] gap-[6px] text-[#6d6d6d] text-[11px] leading-none">
        <Search />
        <span>搜索</span>
      </div>
    </div>
    <div className="flex flex-1 min-h-0">
      <PropTabs />
      <div className="flex-1 pl-[9px] pr-[8px] min-w-0">
        <div className="flex items-center h-[38px] pl-[2px] pt-[1px]">
          <ObjIcon className="w-[15px] h-[15px]" />
          <span className="ml-[8px] text-[#d0d0d0] text-[11px] leading-none">Light</span>
          <Pin className="ml-auto mr-[2px]" />
        </div>
        <div className="flex items-center h-[20px] mt-[7px]">
          <div className="w-[31px] h-[20px] bg-[#3a3a3a] rounded-l-[4px] flex items-center justify-center gap-[2px]">
            <ObjIcon className="w-[14px] h-[14px]" />
            <Chev />
          </div>
          <div className="flex-1 h-[20px] ml-px bg-[#1d1d1d] rounded-r-[4px] flex items-center pl-[7px] text-[#d0d0d0] text-[11px] leading-none">Light</div>
        </div>
        <div className="mt-[10px] h-[281px] bg-[#3d3d3d] rounded-[4px]">
          <div className="flex items-center h-[26px] pl-[8px] pr-[6px]">
            <Chev className="text-[#b8b8b8] w-[10px] h-[10px]" />
            <span className="ml-[4px] text-[#d8d8d8] text-[11px] leading-none">变换</span>
            <Grip className="ml-auto" />
          </div>
          <div className="mt-[7px]">
            <ValRow label="位置" axis="X" value="4." />
            <ValRow axis="Y" value="1." />
            <ValRow axis="Z" value="5." />
            <div className="h-[5px]" />
            <ValRow label="旋转" axis="X" value="37" />
            <ValRow axis="Y" value="3." />
            <ValRow axis="Z" value="10" />
            <div className="h-[5px]" />
            <ValRow label="模式" value="X..." lock={false} dark />
            <div className="h-[5px]" />
            <ValRow label="缩放" axis="X" value="1." />
            <ValRow axis="Y" value="1." />
            <ValRow axis="Z" value="1." />
          </div>
          <div className="flex items-center h-[20px] mt-[11px] pl-[22px]">
            <Chev dir="right" className="text-[#b8b8b8] w-[10px] h-[10px]" />
            <span className="ml-[4px] text-[#d8d8d8] text-[11px] leading-none">变换增量</span>
          </div>
        </div>
        <div className="mt-[3px] h-[40px] bg-[#3d3d3d] rounded-t-[4px] flex items-start pt-[7px] pl-[8px] pr-[6px]">
          <Chev dir="right" className="text-[#b8b8b8] w-[10px] h-[10px] mt-px" />
          <span className="ml-[4px] text-[#d8d8d8] text-[11px] leading-none">关系</span>
          <Grip className="ml-auto mt-[2px]" />
        </div>
      </div>
    </div>
  </div>
);

const Watermark = () => (
  <div className="absolute left-[906px] top-[650px] flex items-start pointer-events-none">
    <svg viewBox="0 0 36 36" className="w-[37px] h-[36px]" fill="none" stroke="#b5262b" strokeWidth="3">
      <path d="M1 2C8 6 14 14 18 21C22 14 28 6 35 2" />
      <path d="M9 10V36M27 10V36M18 21V31M9 31H27" />
    </svg>
    <div className="ml-[2px] w-[88px] flex flex-col">
      <span className="text-[#dd9a3c] text-[21px] font-bold leading-[25px] whitespace-nowrap [font-family:'Noto_Sans_CJK_TC',sans-serif]">華印社區</span>
      <span className="-ml-[4px] mt-[1px] text-[#d0ad78] text-[12px] font-semibold leading-[11px] whitespace-nowrap [font-family:'Liberation_Sans',sans-serif]">www.52cnp.com</span>
    </div>
  </div>
);

export default function App() {
  return (
    <div className="relative w-[1035px] h-[687px] overflow-hidden bg-white [font-family:Inter,'Noto_Sans_CJK_SC',sans-serif]">
      <div className="w-[1032px] h-[687px] flex flex-col bg-[#161616]">
        <div className="h-[31px] shrink-0 bg-white border-t border-[#7c7c7c] flex items-center">
          <BlenderLogo className="w-[15px] h-[12px] ml-[8px]" body="#e87d0d" eye="#2e6fb5" />
          <span className="ml-[6px] text-[#222222] text-[12.3px] leading-none [font-family:'Open_Sans','Noto_Sans_CJK_SC',sans-serif]">* (未保存) - Blender 4.1 Release Candidate</span>
          <div className="ml-auto flex items-center">
            <div className="w-[46px] flex justify-center">
              <div className="w-[10px] h-px bg-[#222222]" />
            </div>
            <div className="w-[46px] flex justify-center">
              <div className="w-[10px] h-[10px] border border-[#222222]" />
            </div>
            <div className="w-[46px] flex justify-center mr-[1px]">
              <svg viewBox="0 0 11 11" className="w-[11px] h-[11px]" stroke="#222222" strokeWidth="1">
                <path d="M0.5 0.5L10.5 10.5M10.5 0.5L0.5 10.5" />
              </svg>
            </div>
          </div>
        </div>
        <div className="h-[27px] shrink-0 bg-[#181818] flex items-end">
          <div className="w-[229px] h-[27px] shrink-0 flex items-center pl-[10px]">
            <BlenderLogo className="w-[16px] h-[13px]" body="#e0e0e0" eye="#e0e0e0" />
            <div className="ml-[1px] flex">
              <MenuTxt>文件</MenuTxt>
              <MenuTxt>编辑</MenuTxt>
              <MenuTxt>渲染</MenuTxt>
              <MenuTxt>窗口</MenuTxt>
              <MenuTxt>帮助</MenuTxt>
            </div>
          </div>
          <div className="flex w-[399px] shrink-0 overflow-hidden">
            <WorkspaceTab w="w-[54px]" active>Layout</WorkspaceTab>
            <WorkspaceTab w="w-[70px]">Modeling</WorkspaceTab>
            <WorkspaceTab w="w-[69px]">Sculpting</WorkspaceTab>
            <WorkspaceTab w="w-[75px]">UV Editing</WorkspaceTab>
            <WorkspaceTab w="w-[88px]">Texture Paint</WorkspaceTab>
            <WorkspaceTab w="w-[43px] !justify-start pl-[10px]"><span className="w-[33px] overflow-hidden">Shading</span></WorkspaceTab>
          </div>
          <div className="self-center flex items-center h-[18px] ml-[7px] w-[191px] rounded-[4px] border border-[#2c2c2c] bg-[#1d1d1d] shrink-0">
            <div className="w-[31px] flex items-center justify-center gap-[2px]">
              <SceneIcon />
              <Chev />
            </div>
            <div className="flex-1 h-full flex items-center pl-[7px] text-[#d8d8d8] text-[11px] leading-none border-l border-[#2c2c2c]">
              <span>Scene</span>
              <Pin className="ml-auto mr-[3px]" />
            </div>
            <div className="w-[19px] h-full bg-[#545454] flex items-center justify-center"><Dup /></div>
            <div className="w-[19px] h-full bg-[#282828] rounded-r-[4px] flex items-center justify-center"><XIcon /></div>
          </div>
          <div className="self-center flex items-center h-[18px] ml-[6px] w-[191px] rounded-[4px] border border-[#2c2c2c] bg-[#1d1d1d] shrink-0">
            <div className="w-[32px] flex items-center justify-center gap-[2px]">
              <LayersIcon />
              <Chev />
            </div>
            <div className="flex-1 h-full flex items-center pl-[7px] text-[#d8d8d8] text-[11px] leading-none border-l border-[#2c2c2c]">ViewLayer</div>
            <div className="w-[19px] h-full bg-[#545454] flex items-center justify-center"><Dup /></div>
            <div className="w-[19px] h-full bg-[#282828] rounded-r-[4px] flex items-center justify-center"><XIcon /></div>
          </div>
        </div>
        <div className="h-[609px] shrink-0 flex">
          <div className="w-[848px] ml-px flex flex-col gap-[5px] shrink-0">
            <Viewport />
            <Timeline />
          </div>
          <div className="w-[180px] ml-[3px] flex flex-col gap-[4px] shrink-0">
            <Outliner />
            <Properties />
          </div>
        </div>
        <div className="relative h-[20px] shrink-0 bg-[#181818] text-[#a0a0a0] text-[11px] leading-none flex items-center pl-[12px]">
          <Mouse side="l" />
          <span className="ml-[12px]">设置活动修改器</span>
          <div className="ml-[112px]"><Mouse side="m" /></div>
          <span className="ml-[11px]">平移视图</span>
          <div className="ml-[145px]"><Mouse side="r" /></div>
          <span className="ml-[11px]">上下文菜单</span>
          <span className="absolute left-[895px] w-[137px] overflow-hidden whitespace-nowrap text-[#8a8a8a]">4.1.0 Release Candidate</span>
        </div>
      </div>
      <Watermark />
    </div>
  );
}
